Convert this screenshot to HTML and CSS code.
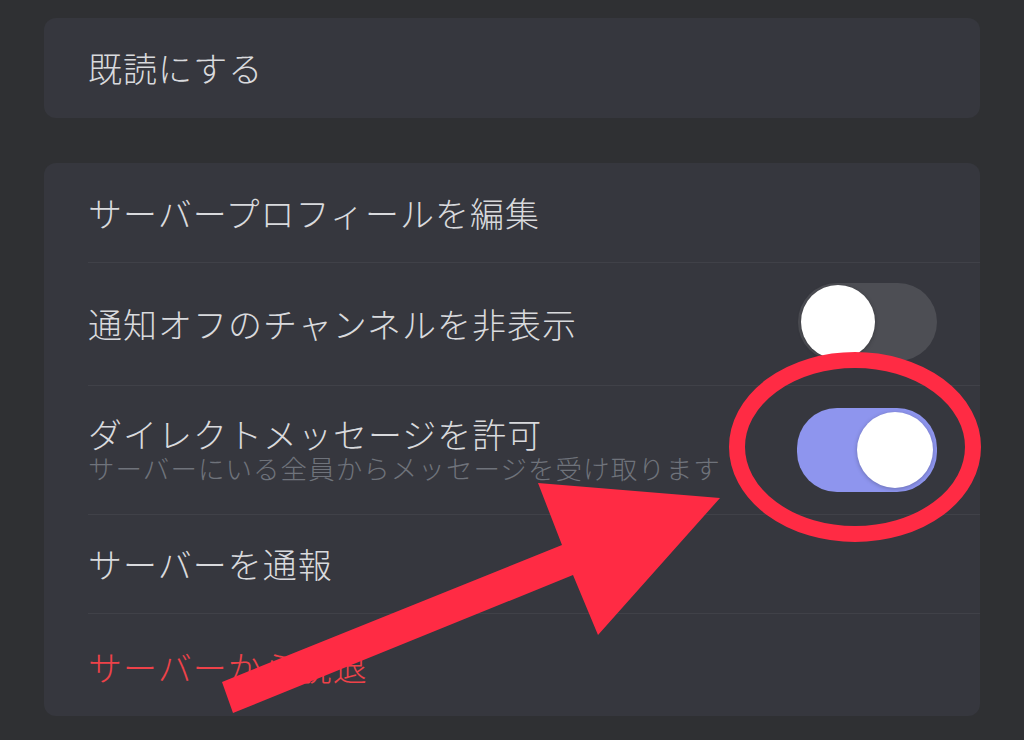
FILE: index.html
```html
<!DOCTYPE html>
<html lang="ja">
<head>
<meta charset="utf-8">
<link rel="stylesheet" href="styles.css">
</head>
<body>
<div class="page">
  <section class="card card-single">
    <div class="row row-h100"><span class="label">既読にする</span></div>
  </section>
  <section class="card card-list">
    <div class="row row-h100 divided"><span class="label">サーバープロフィールを編集</span></div>
    <div class="row row-h123 divided">
      <span class="label">通知オフのチャンネルを非表示</span>
      <span class="toggle toggle-off"><span class="knob"></span></span>
    </div>
    <div class="row row-h129 divided">
      <span class="text-stack">
        <span class="label">ダイレクトメッセージを許可</span>
        <span class="sub">サーバーにいる全員からメッセージを受け取ります</span>
      </span>
      <span class="toggle toggle-on"><span class="knob"></span></span>
    </div>
    <div class="row row-h99 divided"><span class="label">サーバーを通報</span></div>
    <div class="row row-h102"><span class="label danger">サーバーから脱退</span></div>
  </section>
  <svg class="annotation" width="1024" height="740" viewBox="0 0 1024 740">
    <ellipse cx="855" cy="447" rx="118" ry="87" fill="none" stroke="#ff2b44" stroke-width="16"/>
    <polygon points="222,682 562,545 538,483 720,498 598,635 573,575 233,713" fill="#ff2b44"/>
  </svg>
</div>
</body>
</html>
```
FILE: styles.css
```css
html, body {
  margin: 0;
  padding: 0;
}
body {
  background: #2f3033;
  font-family: "Noto Sans CJK JP", "Noto Sans", sans-serif;
  width: 1024px;
  height: 740px;
  overflow: hidden;
}
.page {
  position: relative;
  width: 1024px;
  height: 740px;
  padding: 18px 44px 0 44px;
  box-sizing: border-box;
  display: flex;
  flex-direction: column;
  gap: 45px;
}
.card {
  background: #36373e;
  border-radius: 12px;
  padding-left: 44px;
}
.row {
  display: flex;
  align-items: center;
  justify-content: space-between;
  padding-right: 43px;
  box-sizing: border-box;
}
.divided {
  border-bottom: 1px solid #404148;
}
.row-h100 { height: 100px; }
.row-h123 { height: 123px; }
.row-h129 { height: 129px; }
.row-h99 { height: 99px; }
.row-h102 { height: 102px; padding-top: 4px; }
.label {
  font-size: 34px;
  line-height: 34px;
  color: #d9dadd;
  font-weight: 300;
  letter-spacing: 1px;
}
.danger {
  color: #ee4249;
}
.text-stack {
  display: flex;
  flex-direction: column;
  margin-top: -3px;
}
.sub {
  font-size: 26.5px;
  line-height: 27px;
  color: #6f737b;
  margin-top: 3px;
  font-weight: 300;
  letter-spacing: 1.05px;
}
.toggle {
  display: flex;
  align-items: center;
  width: 140px;
  height: 80px;
  border-radius: 40px;
  padding: 3px;
  box-sizing: border-box;
}
.toggle-off {
  background: #4d4e54;
  justify-content: flex-start;
  margin-top: -4px;
  height: 78px;
  width: 139px;
}
.toggle-on {
  background: #8e95ee;
  justify-content: flex-end;
  height: 84px;
  padding: 4px;
}
.knob {
  width: 74px;
  height: 74px;
  border-radius: 50%;
  background: #ffffff;
  box-shadow: 0 1px 4px rgba(0, 0, 0, 0.25);
}
.toggle-on .knob {
  width: 76px;
  height: 76px;
}
.annotation {
  position: absolute;
  left: 0;
  top: 0;
  pointer-events: none;
}
```
